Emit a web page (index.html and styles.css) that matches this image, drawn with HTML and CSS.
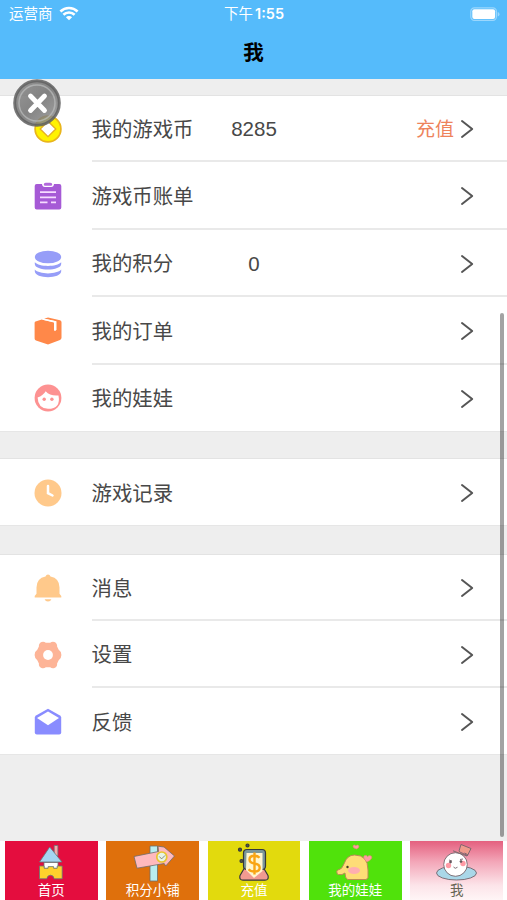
FILE: index.html
```html
<!DOCTYPE html>
<html lang="zh-CN">
<head>
<meta charset="utf-8">
<title>我</title>
<link rel="stylesheet" href="styles.css">
</head>
<body>
<svg width="0" height="0" class="defs">
  <defs>
    <symbol id="chev" viewBox="0 0 14 20"><path d="M2 2 12.2 10 2 18" fill="none" stroke="#555" stroke-width="2" stroke-linecap="round" stroke-linejoin="round"/></symbol>
  </defs>
</svg>
<div class="screen">
  <header class="header">
    <div class="status">
      <div class="carrier"><span>运营商</span>
        <svg width="20" height="15" viewBox="0 0 20 15" fill="none" stroke="#fff" stroke-width="2.6"><path d="M1.4 5.5a12.4 12.4 0 0 1 17.2 0M4.4 8.8a8 8 0 0 1 11.2 0"/><path d="M10 14.3 6.9 11.2a4.4 4.4 0 0 1 6.2 0z" fill="#fff" stroke="none"/></svg>
      </div>
      <div class="time">下午 <b>1:55</b></div>
      <div class="battery">
        <svg width="30" height="15" viewBox="0 0 30 15"><rect x=".8" y=".8" width="25.6" height="12.6" rx="3.6" fill="none" stroke="#9bd7fd" stroke-width="1.2"/><rect x="2.3" y="2.3" width="22.8" height="9.6" rx="2" fill="#fff"/><path d="M27.7 5v4.4q1.8-.5 1.8-2.2T27.7 5z" fill="#9bd7fd"/></svg>
      </div>
    </div>
    <h1 class="title">我</h1>
  </header>

  <main class="content">
    <section class="group">
      <div class="row first">
        <svg class="icon" viewBox="0 0 28 28"><circle cx="14" cy="14" r="12.9" fill="#fff200" stroke="#e9b51c" stroke-width="1.7"/><path d="M14 6.3 21.8 14 14 21.7 6.2 14z" fill="#fff" stroke="#e4ae20" stroke-width="1.3"/></svg>
        <div class="cell"><span class="label">我的游戏币</span><span class="value">8285</span><span class="link">充值</span><svg class="chev"><use href="#chev"/></svg></div>
      </div>
      <div class="row">
        <svg class="icon" viewBox="0 0 28 28"><path d="M2.7 2H8q.3 3 2.8 3h6.4Q19.7 5 20 2h5.3q2 0 2 2v21.5q0 2-2 2H2.7q-2 0-2-2V4q0-2 2-2z" fill="#a65ad6"/><path d="M9.7 3q0-2.300 2-2.300h4.600q2 0 2 2.300l-1 .8h-6.600z" fill="#b268dc"/><path d="M6 10.200h16M6 15.300h16M6 20.400h7.500M17 20.400h5" stroke="#f6dcff" stroke-width="1.700"/></svg>
        <div class="cell"><span class="label">游戏币账单</span><svg class="chev"><use href="#chev"/></svg></div>
      </div>
      <div class="row">
        <svg class="icon" viewBox="0 0 28 28" fill="#969df8"><ellipse cx="14" cy="7" rx="13.200" ry="6.300"/><path d="M.8 12.200C5 17.100 23 17.100 27.200 12.200V14c0 7.300-26.400 7.300-26.400 0z"/><path d="M.8 19.600C5 24.700 23 24.700 27.200 19.600v1.700c0 7.800-26.400 7.800-26.400 0z"/></svg>
        <div class="cell"><span class="label">我的积分</span><span class="value">0</span><svg class="chev"><use href="#chev"/></svg></div>
      </div>
      <div class="row">
        <svg class="icon" viewBox="0 0 28 28"><path d="M1.500 4.600 7.800 2.500 20 5.400v8.200l2.500-.5V4.200L10 1.800 14 .6 26 3.200q1.500.5 1.500 2v15.600q0 1.600-1.500 2.200L14 27.500 2 23.600Q.6 23 .6 21.500V6q0-1 .9-1.400z" fill="#ff8849"/><path d="m8.600 2.100 12.500 2.700v9" fill="none" stroke="#fff" stroke-width="1.500"/></svg>
        <div class="cell"><span class="label">我的订单</span><svg class="chev"><use href="#chev"/></svg></div>
      </div>
      <div class="row last">
        <svg class="icon" viewBox="0 0 28 28"><circle cx="14" cy="14" r="13.400" fill="#fd9292"/><path d="M3.600 13.500Q9 11.700 11.700 7.200 16 12.200 24.500 11.400 27 24.800 14 24.800 4 24.500 3.600 13.500z" fill="#fff"/><circle cx="10.200" cy="15.300" r="1.700" fill="#fd9292"/><circle cx="17.900" cy="15.300" r="1.700" fill="#fd9292"/></svg>
        <div class="cell"><span class="label">我的娃娃</span><svg class="chev"><use href="#chev"/></svg></div>
      </div>
    </section>

    <section class="group">
      <div class="row last">
        <svg class="icon" viewBox="0 0 28 28"><circle cx="14" cy="14" r="13.500" fill="#ffc98b"/><path d="M14 7v7.200l4.500 2.300" fill="none" stroke="#fff" stroke-width="2.500" stroke-linecap="round"/></svg>
        <div class="cell"><span class="label">游戏记录</span><svg class="chev"><use href="#chev"/></svg></div>
      </div>
    </section>

    <section class="group">
      <div class="row first">
        <svg class="icon" viewBox="0 0 28 28" fill="#ffc98b"><path d="M14 .6q1.800 0 2.500 2 9 1.800 9 11v6.200L27.300 22v1.500H.7V22l1.800-2.200v-6.200q0-9.200 9-11 .7-2 2.500-2zM10.600 25.200h6.800q-.8 2.300-3.400 2.300t-3.400-2.300z"/></svg>
        <div class="cell"><span class="label">消息</span><svg class="chev"><use href="#chev"/></svg></div>
      </div>
      <div class="row">
        <svg class="icon" viewBox="0 0 28 28"><path d="M7.500 1q2.500-.8 4.300.8h4.400q1.800-1.600 4.300-.8 3 1.500 2.600 4.600l1.600 3.200q2.700 1.700 2.700 5.200t-2.700 5.200l-1.600 3.200q.4 3.100-2.600 4.600-2.500.8-4.300-.8h-4.400q-1.800 1.600-4.300.8-3-1.500-2.600-4.600l-1.600-3.200Q.6 17.500.6 14t2.700-5.200l1.600-3.200Q4.500 2.500 7.500 1z" fill="#fdb497"/><circle cx="14" cy="14" r="4.900" fill="#fff"/></svg>
        <div class="cell"><span class="label">设置</span><svg class="chev"><use href="#chev"/></svg></div>
      </div>
      <div class="row last">
        <svg class="icon" viewBox="0 0 28 28"><path d="M14 .8 26 7.400q1.200.8 1.200 2v15.200q0 2-2 2H2.800q-2 0-2-2V9.400q0-1.200 1.200-2z" fill="#898cff"/><path d="M14 3.500 25 9.900 14 17.200 3 9.900z" fill="#fff"/></svg>
        <div class="cell"><span class="label">反馈</span><svg class="chev"><use href="#chev"/></svg></div>
      </div>
    </section>
  </main>

  <nav class="tabs">
    <a class="tab home"><svg viewBox="0 0 44 42" stroke="#667778" stroke-width=".8" stroke-linejoin="round"><path d="M25.200 4.500h3.700V15h-3.700z" fill="#f6a8aa"/><path d="M20.700 6 33 21H10.500z" fill="#a5d5f2"/><path d="M15 21.500h14v6H15z" fill="#fff"/><path d="M10.500 25h4.600v2.200h4v-1.600h5.500v1.600h3.600V25h5v12.800h-8q-.5-3.600-3.700-3.600t-3.700 3.600h-7.300z" fill="#ffd12c"/></svg><span>首页</span></a>
    <a class="tab shop"><svg viewBox="0 0 44 42" stroke="#6d6c69" stroke-width=".8" stroke-linejoin="round"><path d="M19 5h7.500v35H19z" fill="#b9edf0"/><path d="m3 15.500 24.500-5-.5-5.300 6 .8 10.500 9L34.700 25l-1.500-2.500L6 27.200z" fill="#ffb9bd"/><circle cx="30.800" cy="16" r="5" fill="#e6f5e6" stroke="#e9c52e" stroke-width="1.700"/><path d="m28.300 15.500 2.300 2.400 3.500-3.500" fill="none"/></svg><span>积分小铺</span></a>
    <a class="tab charge"><svg viewBox="0 0 44 42" stroke="#35383a" stroke-width="1.200" stroke-linejoin="round"><path d="M13 26 8 34.500q-1 4.700 3 4.700h22q4 0 3-4.700L31 26z" fill="#f19a91"/><rect x="11.500" y="8.500" width="22" height="20" rx="3.500" fill="#7c9799"/><path d="M14.500 12h16v18L22 37l-8-8z" fill="#fff6cf" stroke="none"/><path d="M27.500 16.800q-1.700-2-5-2-5 0-5 3.700 0 3.200 5 4 5.200.8 5.200 4.200 0 3.800-5.400 3.800-3.800 0-5.700-2.300M22.500 11.500v22" fill="none" stroke="#f9a514" stroke-width="2.400"/><g fill="#55553e"><circle cx="15.500" cy="4.500" r="1.500"/><circle cx="8" cy="8.700" r="1.500"/><circle cx="9.500" cy="20" r="1.500"/></g></svg><span>充值</span></a>
    <a class="tab dolls"><svg viewBox="0 0 44 42" stroke="#b98a55" stroke-width="1" stroke-linejoin="round"><path d="M14.500 38.500Q12 37 12 32q-3 2.500-6.500 1.500-1.500.3-1.700-2.500-.5-1.500 1.200-2 4-.5 6.200-6.500Q14 14 21.500 14 35 14 35 29v8l-2 1.500z" fill="#fedd77"/><ellipse cx="21" cy="29.500" rx="6" ry="3.500" fill="#ffaeb0" stroke="none"/><circle cx="14.500" cy="26" r="1.200" fill="#473928" stroke="none"/><path d="M34 21q-5-4.500-2.500-6.500 2-.7 3 1.200 1.500-2 3.800-.7 2 3-4.300 6zM23.500 8q-4-1-3.500-3.200 1.500-1.600 2.800 0 2-1.600 3.200.4Q26 7.300 23.500 8z" fill="#ff9ca4" stroke="#dc8b6b" stroke-width=".6"/></svg><span>我的娃娃</span></a>
    <a class="tab me"><svg viewBox="0 0 44 42" stroke="#73636b" stroke-width=".9" stroke-linejoin="round"><ellipse cx="21.500" cy="32" rx="20" ry="7" fill="#a9d7e8"/><circle cx="20.500" cy="23.500" r="11.800" fill="#fff"/><path d="M18 9.800 32 15l.5-1.500-3-1.500m-5.500-2 2-6.500L36 7.500l-3.500 7-7.700-3.500z" fill="#ef9b8c"/><g fill="#ff9aa5" stroke="none"><circle cx="13.500" cy="24.500" r="2.700"/><circle cx="28" cy="22.500" r="2.700"/></g><path d="m14 19 3 1m8-1.500 3-.5M18.500 26q1.500 2.500 4 .2" fill="none"/><circle cx="15.500" cy="21" r="1" fill="#444"/><circle cx="26" cy="20.500" r="1" fill="#444"/></svg><span>我</span></a>
  </nav>

  <div class="scrollbar"></div>
  <button class="close" aria-label="关闭"><svg viewBox="0 0 48 48"><defs><linearGradient id="metal" x1="0" y1="0" x2="1" y2="1"><stop offset="0" stop-color="#888"/><stop offset=".5" stop-color="#707070"/><stop offset="1" stop-color="#969696"/></linearGradient></defs><circle cx="24" cy="24" r="22.300" fill="url(#metal)" fill-opacity=".86" stroke="#606060" stroke-opacity=".85" stroke-width="3"/><circle cx="24" cy="24" r="18" fill="none" stroke="#bcbebe" stroke-opacity=".7" stroke-width="1.500"/><path d="m17.500 17 14 14.500m0-14.500-14 14.500" stroke="#fff" stroke-width="4.800" stroke-linecap="round"/></svg></button>
</div>
</body>
</html>
```
FILE: styles.css
```css
* { box-sizing: border-box; }
body {
  margin: 0;
  background: #eee;
  font-family: Inter, "Noto Sans CJK SC", sans-serif;
  color: #484848;
}
.defs { display: block; }
.screen {
  position: relative;
  width: 507px;
  height: 900px;
  overflow: hidden;
  display: flex;
  flex-direction: column;
}
.header {
  height: 79px;
  background: #55bbfb;
  display: flex;
  flex-direction: column;
  flex: none;
}
.status {
  height: 27px;
  padding: 0 7px 0 9px;
  display: grid;
  grid-template-columns: 1fr auto 1fr;
  align-items: center;
  color: #fff;
  font-size: 14.5px;
  line-height: 28px;
}
.carrier { display: flex; align-items: center; gap: 6px; }
.carrier svg { margin-top: -2px; }
.time { white-space: nowrap; margin-right: 1px; word-spacing: -2px; }
.time b { font-weight: 600; font-size: 14.5px; }
.battery { display: flex; justify-content: flex-end; }
.title {
  margin: 0;
  height: 52px;
  line-height: 52px;
  text-align: center;
  font-size: 20.5px;
  font-weight: 700;
  color: #000;
}
.content { flex: 1; padding-top: 16px; }
.group {
  background: #fff;
  border-top: 1px solid #e3e3e3;
  border-bottom: 1px solid #e6e6e6;
  margin-bottom: 26.5px;
}
.group + .group { margin-bottom: 27.5px; }
.row {
  height: 67.5px;
  display: flex;
  align-items: stretch;
}
.row.first { height: 66px; }
.row.last { height: 66px; }
.icon {
  width: 28px;
  height: 28px;
  margin: auto 30px auto 34px;
  flex: none;
}
.row:not(.first) .icon { padding-top: 1px; height: 29px; }
.cell {
  flex: 1;
  display: flex;
  align-items: center;
  padding-top: 3px;
  padding-right: 33px;
  border-bottom: 2px solid #e9e9e9;
}
.first .cell { padding-top: 2px; }
.last .cell { border-bottom: 0; padding-top: 2px; }
.label {
  width: 117px;
  margin: 1px 0 0 -.5px;
  font-size: 20.4px;
  line-height: 28px;
  white-space: nowrap;
}
.first .label { margin-top: 2px; }
.value {
  width: 90px;
  margin-left: .5px;
  text-align: center;
  font-family: "Liberation Sans", Inter, sans-serif;
  font-size: 20.5px;
}
.link {
  margin-left: auto;
  margin-right: 6px;
  margin-top: 2px;
  font-size: 19px;
  line-height: 28px;
  color: #ee835c;
}
.chev { width: 14px; height: 20px; margin-left: auto; }
.link + .chev { margin-left: 0; }
.tabs {
  height: 59px;
  background: #fff;
  padding: 0 4px 0 5px;
  display: flex;
  gap: 8.7px;
  flex: none;
}
.tab {
  flex: 1;
  display: flex;
  flex-direction: column;
  align-items: center;
  color: #fff;
  font-size: 13.5px;
  line-height: 16px;
}
.tab svg { width: 44px; height: 42px; flex: none; margin-bottom: -1px; }
.home { background: #e40d3e; }
.shop { background: #df700c; }
.charge { background: #e2da0d; }
.dolls { background: #50e20b; }
.me { background: linear-gradient(#e4607f, #f3a6b8 35%, #fce4e9 75%, #fff5f6); color: #665; }
.scrollbar {
  position: absolute;
  left: 499.5px;
  top: 313px;
  width: 4px;
  height: 524px;
  border-radius: 2px;
  background: rgba(0, 0, 0, .36);
}
.close {
  position: absolute;
  left: 13px;
  top: 79px;
  width: 48px;
  height: 48px;
  padding: 0;
  border: 0;
  background: none;
}
.close svg { display: block; width: 48px; height: 48px; }
```
